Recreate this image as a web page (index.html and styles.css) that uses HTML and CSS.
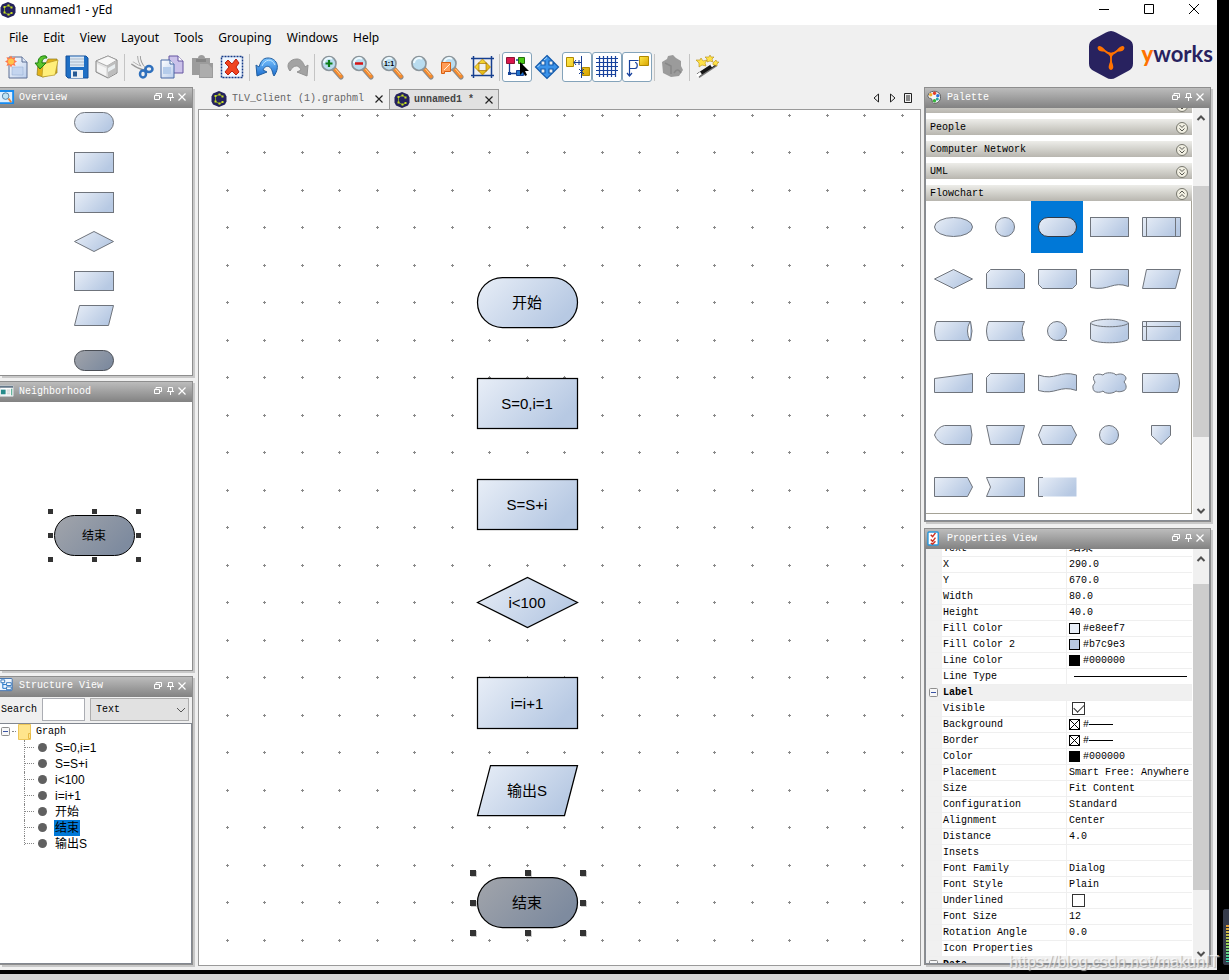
FILE: index.html
```html
<!DOCTYPE html>
<html lang="en">
<head>
<meta charset="utf-8">
<title>unnamed1 - yEd</title>
<link rel="stylesheet" href="styles.css">
</head>
<body>
<svg class="defs" aria-hidden="true">
  <defs>
    <linearGradient id="fill" x1="0" y1="0" x2="1" y2="0.5"><stop offset="0" stop-color="#e8eef7"/><stop offset="1" stop-color="#b7c9e3"/></linearGradient>
    <linearGradient id="dim" x1="0" y1="0" x2="1" y2="0.5"><stop offset="0" stop-color="#a2a5ab"/><stop offset="1" stop-color="#7e8b9f"/></linearGradient>
    <linearGradient id="paper" x1="0" y1="0" x2="1" y2="1"><stop offset="0" stop-color="#fff"/><stop offset="1" stop-color="#b9cdec"/></linearGradient>
    <linearGradient id="gold" x1="0" y1="0" x2="1" y2="1"><stop offset="0" stop-color="#ffe94a"/><stop offset="1" stop-color="#d9a400"/></linearGradient>
    <linearGradient id="blue" x1="0" y1="0" x2="0" y2="1"><stop offset="0" stop-color="#7cc4ff"/><stop offset="1" stop-color="#1c6fd0"/></linearGradient>
    <symbol id="yed" viewBox="0 0 16 16"><path d="M8 0l6 2.600 1.500 3v5L14 13.400 8 16l-6-2.600-1.500-2.800v-5l1.500-3z" fill="#23215c"/><path d="M11.500 5.500L8.500 3.500 4.500 5v5.500l4 2.300 3-1.600" fill="none" stroke="#7f9a2e" stroke-width="1"/><path d="M7.500 2.500h2v2h-2zM3.500 4h2v2h-2zM3.500 9.500h2v2h-2zM7.500 11.500h2v2h-2zM10.500 4.500h2v2h-2zM10.500 10h2v2h-2z" fill="#c6dc22"/></symbol>
    <symbol id="float" viewBox="0 0 10 10"><path d="M3 3V1.500h5.500v4H7M1.500 3.500h5v4h-5z" fill="none" stroke="#fff"/></symbol>
    <symbol id="pin" viewBox="0 0 10 10"><path d="M3.500 1.500h4v4h-4zM2 5.500h7M5.500 6v3" fill="none" stroke="#fff"/></symbol>
    <symbol id="close" viewBox="0 0 10 10"><path d="M1.500 1.500l7 7M8.500 1.500l-7 7" fill="none" stroke="currentColor" stroke-width="1.200"/></symbol>
    <symbol id="lens" viewBox="0 0 26 26"><path d="M15 15l7 8" stroke="#8b8b8b" stroke-width="5" stroke-linecap="round"/><path d="M16 15.500l6 7" stroke="#f58a2c" stroke-width="3.500" stroke-linecap="round"/><path d="M16.500 15l5 6" stroke="#ffd09a"/><circle cx="10" cy="9.500" r="7" fill="#b9dcef" stroke="#8b959b" stroke-width="1.700"/><path d="M5 9a5 5 0 0 1 8-4" fill="none" stroke="#eefaff" stroke-width="2"/></symbol>
    <symbol id="down" viewBox="0 0 14 14"><circle cx="7" cy="7" r="5.500" fill="#f1efe2" stroke="#77776d"/><path d="M4.500 4l2.500 2.500L9.500 4M4.500 7.500L7 10l2.500-2.500" fill="none" stroke="#55554e"/></symbol>
    <symbol id="up" viewBox="0 0 14 14"><circle cx="7" cy="7" r="5.500" fill="#f1efe2" stroke="#77776d"/><path d="M4.500 6.500L7 4l2.500 2.500M4.500 10L7 7.500 9.500 10" fill="none" stroke="#55554e"/></symbol>
    <symbol id="chev-up" viewBox="0 0 10 10"><path d="M1.500 7L5 3.500 8.500 7" fill="none" stroke="#505050" stroke-width="2"/></symbol>
    <symbol id="chev-down" viewBox="0 0 10 10"><path d="M1.500 3L5 6.500 8.500 3" fill="none" stroke="#505050" stroke-width="2"/></symbol>
    <symbol id="minus" viewBox="0 0 10 10"><rect x=".5" y=".5" width="8" height="8" rx="1" fill="#f7f7f7" stroke="#8d8d8d"/><path d="M2 4.500h5" stroke="#3a53a4"/></symbol>
    <pattern id="dots" x="27" y="4" width="75" height="75" patternUnits="userSpaceOnUse">
      <path d="M0 1.500h3M1.500 0v3M37 1.500h3M38.500 0v3M0 38.500h3M1.500 37v3M37 38.500h3M38.500 37v3" stroke="#8a8a8a" shape-rendering="crispEdges"/>
    </pattern>
  </defs>
</svg>

<div class="screen">
  <main class="window">
    <header class="titlebar">
      <svg class="i16"><use href="#yed"/></svg>
      <h1>unnamed1 - yEd</h1>
      <div class="caption">
        <button aria-label="Minimize"><svg viewBox="0 0 12 12"><path d="M1 5.500h10" stroke="#000"/></svg></button>
        <button aria-label="Maximize"><svg viewBox="0 0 12 12"><path d="M1.500.500h9v9h-9z" fill="none" stroke="#000"/></svg></button>
        <button aria-label="Close"><svg viewBox="0 0 12 12"><path d="M1 0l10 10M11 0L1 10" stroke="#000"/></svg></button>
      </div>
    </header>

    <div class="top">
      <div class="commands">
        <nav class="menu">
          <a href="#">File</a><a href="#">Edit</a><a href="#">View</a><a href="#">Layout</a><a href="#">Tools</a><a href="#">Grouping</a><a href="#">Windows</a><a href="#">Help</a>
        </nav>
        <div class="toolbar">
          <button aria-label="New"><svg viewBox="0 0 26 26"><path d="M5 3h13l5 5v16H5z" fill="url(#paper)" stroke="#5c6f94"/><path d="M18 3v5h5" fill="#dfe9f8" stroke="#5c6f94"/><path d="M8 13h11v8H8z" fill="#c4d5ef" stroke="#91a8cf" stroke-width=".5"/><path d="M7 1.500l1.500 2.500 3-1-1 3 2.500 1.500-2.500 1.500 1 3-3-1L7 13.500 5.500 11l-3 1 1-3L1 7.500 3.500 6l-1-3 3 1z" fill="#ff7a4c"/><circle cx="7" cy="7.500" r="3" fill="#ffc44a"/></svg></button>
          <button aria-label="Open"><svg viewBox="0 0 26 26"><path d="M4 9h8l2-4h9v14l-14 4-6-2z" fill="#e3b21b" stroke="#8b7a20" stroke-width=".7"/><path d="M9 10l15-4-3 15-13 2z" fill="#ffef7a" stroke="#b59622" stroke-width=".7"/><path d="M12 2C6 1 4 5 4 9H1l5 6 6-6H8c0-3 1-5 5-5z" fill="#5ac52b" stroke="#1c7e13"/></svg></button>
          <button aria-label="Save"><svg viewBox="0 0 26 26"><path d="M2 2h20l2 2v20H4l-2-2z" fill="#1e6fc5" stroke="#15509a"/><path d="M6 2.500h14V13H6z" fill="#dbe8f5"/><path d="M6 5h14M6 8h14M6 11h14" stroke="#a9b7c7"/><path d="M7 16h12v8H7z" fill="#e9eef3"/><path d="M9 17.500h4v5H9z" fill="#275a94"/></svg></button>
          <button aria-label="Print"><svg viewBox="0 0 26 26"><path d="M2 7l12-5 9 4v13l-9 5-12-6z" fill="#e2e2e2" stroke="#848484"/><path d="M2 7l11 5 10-6-9-4z" fill="#f8f8f8" stroke="#909090" stroke-width=".7"/><path d="M13 12l9-5v12l-8 5z" fill="#bdbdbd"/><path d="M3 10l9 4v8l-9-5z" fill="#f4f4f4"/><path d="M14 14l7-4v4l-7 4z" fill="#e9eef0"/></svg></button>
          <i class="sep"></i>
          <button aria-label="Cut"><svg viewBox="0 0 26 26"><path d="M3 9c4 3 8 5 13 6M10 2c0 5 2 9 6 14" fill="none" stroke="#989898" stroke-width="3.500"/><path d="M3 8.500c4 3 8 5 12 6M10 2c0 5 2 9 5 12" fill="none" stroke="#f0f0f0" stroke-width="1.800"/><ellipse cx="20" cy="15" rx="3.500" ry="3" fill="none" stroke="#2f70bd" stroke-width="2.500"/><ellipse cx="14" cy="20" rx="3" ry="3.500" fill="none" stroke="#2f70bd" stroke-width="2.500"/></svg></button>
          <button aria-label="Copy"><svg viewBox="0 0 26 26"><path d="M10 2h9l5 5v12H10z" fill="#cbc2ea" stroke="#6554a0"/><path d="M19 2v5h5" fill="#fff" stroke="#6554a0"/><path d="M2 6h9l4 4v14H2z" fill="url(#paper)" stroke="#4869a5"/><path d="M11 6v4h4" fill="#fff" stroke="#4869a5"/><path d="M4 13h8v7H4z" fill="#b5cceb"/></svg></button>
          <button aria-label="Paste"><svg viewBox="0 0 26 26"><path d="M3 4h6c0-4 7-4 7 0h5v5h3v15H10v-3H3z" fill="#9c9c9c"/><path d="M7 5h10v3H7z" fill="#858585"/><path d="M11 10h8l4 4v9H11z" fill="#adadad"/></svg></button>
          <button aria-label="Delete"><svg viewBox="0 0 26 26"><path d="M2.500 2.500h21v21h-21z" fill="#eef6ff" stroke="#163b87" stroke-width="1.500" stroke-dasharray="2 1"/><path d="M9 6l4 4 4-5 3 4-3 4 3 5-3 3-4-4-4 4-3-3 4-5-4-4z" fill="#f04420" stroke="#b92010"/></svg></button>
          <i class="sep"></i>
          <button aria-label="Undo"><svg viewBox="0 0 26 26"><path d="M2 11l1 11 10-4-4-2c2-5 8-6 10 4l1 2c7-10 2-18-6-18-5 0-7 3-9 9z" fill="url(#blue)" stroke="#225e9f"/><path d="M8 12c3-7 10-8 13-1" fill="none" stroke="#bfe5ff"/></svg></button>
          <button aria-label="Redo"><svg viewBox="0 0 26 26"><path d="M24 11l-1 11-10-4 4-2C15 11 10 10 6 17 1 11 6 5 13 5c4 0 6 3 8 8z" fill="#a3a3a3" stroke="#929292"/></svg></button>
          <i class="sep"></i>
          <button aria-label="Zoom in"><svg viewBox="0 0 26 26"><use href="#lens"/><path d="M10 6v7M6.500 9.500h7" stroke="#0b7c18" stroke-width="2.200"/></svg></button>
          <button aria-label="Zoom out"><svg viewBox="0 0 26 26"><use href="#lens"/><path d="M6 9.500h8" stroke="#d51616" stroke-width="2.500"/></svg></button>
          <button aria-label="Zoom 1:1"><svg viewBox="0 0 26 26"><use href="#lens"/><text x="10" y="12" class="one">1:1</text></svg></button>
          <button aria-label="Zoom"><svg viewBox="0 0 26 26"><use href="#lens"/></svg></button>
          <button aria-label="Zoom to selection"><svg viewBox="0 0 26 26"><use href="#lens"/><path d="M2.500 8.500h9v9h-6v2h-3z" fill="#ff9d58" stroke="#d95f10"/><path d="M5 16l6-6" stroke="#fff2da"/></svg></button>
          <button aria-label="Fit content"><svg viewBox="0 0 26 26"><path d="M4.500 2v22M22.500 2v22M2 4.500h23M2 21.500h23" stroke="#163f8f" stroke-width="1.500"/><path d="M13.500 5l4.500 4.500H9zM13.500 21l4.500-4.500H9zM5.500 13L10 8.500v9zM21.500 13L17 8.500v9z" fill="url(#gold)" stroke="#a87500" stroke-width=".7"/></svg></button>
          <i class="sep"></i>
          <button class="on" aria-label="Edit mode"><svg viewBox="0 0 26 26"><path d="M5.500 10v9.500h8M12 6h3M18 9v9" stroke="#174396" fill="none" stroke-width="1.300"/><path d="M2.500 3.500h8v6h-8z" fill="#d9164c" stroke="#8c1435"/><path d="M14.500 3.500h6v6h-6z" fill="#4cc915" stroke="#257010"/><path d="M4 18h3v3H4z" fill="#174396"/><path d="M12.500 16.500h7v5h-7z" fill="#2374ca" stroke="#174396"/><path d="M16 8v13l3-3 2 4 2-1-2-4h4z" fill="#000"/></svg></button>
          <button aria-label="Navigation mode"><svg viewBox="0 0 26 26"><path d="M13 1.500l5.500 5.500H15v4h4V7.500l5.500 5.500-5.500 5.500V15h-4v4h3.500L13 24.500 7.500 19H11v-4H7v3.500L1.500 13 7 7.500V11h4V7H7.500z" fill="#3b93ea" stroke="#155cad" stroke-width="1.200"/><path d="M13 3.500L10 6M3.500 13L6 10.500" stroke="#b4deff"/></svg></button>
          <button class="on" aria-label="Snap lines"><svg viewBox="0 0 26 26"><path d="M2.500 3.500h7v9h-7zM18.500 13.500h7v8h-7z" fill="url(#gold)" stroke="#b08900"/><path d="M17.500 2v22M10 8.500h7M12 6l-2 2.500 2 2.500M15 6v5M15 15l5 5M20 15l-5 5" fill="none" stroke="#173d91"/></svg></button>
          <button class="on" aria-label="Grid"><svg viewBox="0 0 26 26"><path d="M5.500 2v21M9.500 2v21M13.500 2v21M17.500 2v21M21.500 2v21M2 4.500h22M2 8.500h22M2 12.500h22M2 16.500h22M2 20.500h20" stroke="#17419c" stroke-width="1.200"/></svg></button>
          <button class="on" aria-label="Orthogonal edges"><svg viewBox="0 0 26 26"><path d="M5.500 21V6.500h9M3 19l2.500 3L8 19M6 14.500h5c3 0 3-6 0-6" fill="none" stroke="#17419c" stroke-width="1.200"/><path d="M15.500 2.500h9v9h-9z" fill="url(#gold)" stroke="#b08900"/></svg></button>
          <i class="sep"></i>
          <button aria-label="Groups"><svg viewBox="0 0 26 26"><path d="M3 8l5-3 1-3 5-1 3 3 5 3v5l2 4-4 6-8 1-8-4z" fill="#9b9b9b"/><path d="M6 9l6 3v8M15 19c3-5 5-3 7 0" stroke="#888" stroke-width="1.500" fill="none"/></svg></button>
          <i class="sep"></i>
          <button aria-label="Magic"><svg viewBox="0 0 26 26"><path d="M4 22L22 10" stroke="#777" stroke-width="5"/><path d="M4 21L21 10" stroke="#151515" stroke-width="3.500"/><path d="M3 22l4-3M17 12l4-3" stroke="#fff" stroke-width="3"/><path d="M7 4l2 3 4-1-2 3 1 3-4-1-3 2v-4L2 6h4zM16 1l1 2h3l-2 2 1 3-3-1-3 1v-3l-2-2h4zM22 6l1 2h2l-2 2v2l-2-1h-2V9z" fill="#ffe247" stroke="#b58d12" stroke-width=".6"/></svg></button>
        </div>
      </div>
      <a class="logo" href="#" aria-label="yworks">
        <svg viewBox="0 0 46 48"><path d="M18 1.500q5-3 10 0l13 7q4 2 4 7v17q0 5-4 7l-13 7q-5 3-10 0l-13-7q-4-2-4-7v-17q0-5 4-7z" fill="#28225f"/><path d="M12 17c4 1 7 6 11 6s7-5 11-6M23 23v13" fill="none" stroke="#ff7200" stroke-width="1.800"/><path d="M9.500 17c1-4 6-1 8 3-3 1-7 1-8-3zM36.500 17c-1-4-6-1-8 3 3 1 7 1 8-3zM23 29c2 4 4 9 0 10-4-1-2-6 0-10zM19 21c3 1 5 1 8 0l-4 6z" fill="#ff7200"/></svg>
        <span><b>y</b>works</span>
      </a>
    </div>

    <div class="work">
      <aside class="left">
        <section class="panel">
          <header><svg class="picon" viewBox="0 0 16 16"><path d="M-1 1h15v13H-1z" fill="#dff0ff" stroke="#178bf0" stroke-width="2"/><circle cx="6" cy="6.500" r="3.500" fill="#bfe4f5" stroke="#517da3"/><path d="M9 9l3 4" stroke="#ec8430" stroke-width="2"/></svg><h2>Overview</h2>
            <button aria-label="Float"><svg><use href="#float"/></svg></button><button aria-label="Pin"><svg><use href="#pin"/></svg></button><button aria-label="Close"><svg><use href="#close"/></svg></button></header>
          <svg class="view" role="img" aria-label="Overview of the graph"><g fill="url(#fill)" stroke="#6f747c"><rect x="74.500" y="4.500" width="39" height="20" rx="10"/><rect x="74.500" y="44.500" width="39" height="20"/><rect x="74.500" y="84.500" width="39" height="20"/><path d="M74.500 133.500l19.500-10 19.500 10-19.500 10z"/><rect x="74.500" y="163.500" width="39" height="19"/><path d="M79.500 197.500h34l-5 20h-34z"/><rect x="74.500" y="242.500" width="39" height="20" rx="10" fill="url(#dim)" stroke="#4b4f56"/></g></svg>
        </section>

        <section class="panel">
          <header><svg class="picon" viewBox="0 0 16 16"><path d="M0 2h14v11H0z" fill="#fff" stroke="#d3d9dd"/><path d="M0 2h14v2H0z" fill="#65788a"/><path d="M1 6h5v5H1z" fill="#278b8b"/><path d="M7 6.500h4M7 8.500h4M7 10.500h4" stroke="#bcc5c8"/><path d="M12.500 5v7" stroke="#2d9a79"/></svg><h2>Neighborhood</h2>
            <button aria-label="Float"><svg><use href="#float"/></svg></button><button aria-label="Pin"><svg><use href="#pin"/></svg></button><button aria-label="Close"><svg><use href="#close"/></svg></button></header>
          <svg class="view" role="img" aria-label="Neighborhood of the selection"><rect x="54.500" y="113.500" width="80" height="40" rx="20" fill="url(#dim)" stroke="#000"/><text x="94" y="138" class="t12">结束</text><path d="M48 107h5v5h-5zM92 107h5v5h-5zM136 107h5v5h-5zM48 131h5v5h-5zM136 131h5v5h-5zM48 155h5v5h-5zM92 155h5v5h-5zM136 155h5v5h-5z" fill="#333"/></svg>
        </section>

        <section class="panel">
          <header><svg class="picon" viewBox="0 0 16 16"><rect x="-1" y=".5" width="14" height="13" rx="1" fill="#eef6ff" stroke="#3c6fae"/><path d="M3 4v7h4M3 7h4" fill="none" stroke="#1571c9"/><path d="M1 2h4v3H1zM7 5h5v3H7zM7 9.500h5v3H7z" fill="#fff" stroke="#3276bd"/></svg><h2>Structure View</h2>
            <button aria-label="Float"><svg><use href="#float"/></svg></button><button aria-label="Pin"><svg><use href="#pin"/></svg></button><button aria-label="Close"><svg><use href="#close"/></svg></button></header>
          <form class="search">
            <label for="q">Search</label><input id="q" type="text">
            <span class="combo"><select aria-label="Search in"><option>Text</option></select><svg viewBox="0 0 10 10"><path d="M1 3l4 4 4-4" fill="none" stroke="#555"/></svg></span>
          </form>
          <div class="tree">
            <div class="root"><svg class="box"><use href="#minus"/></svg><i></i><svg class="folder" viewBox="0 0 14 16"><path d="M.500.500h12v15H.500z" fill="#ffe58c" stroke="#eec75a"/><path d="M10.500 9.500h2v5h-2z" fill="#ffe58c" stroke="#e6b944"/></svg><span>Graph</span></div>
            <ul>
              <li><span>S=0,i=1</span></li><li><span>S=S+i</span></li><li><span>i&lt;100</span></li><li><span>i=i+1</span></li><li><span>开始</span></li><li class="sel"><span>结束</span></li><li><span>输出S</span></li>
            </ul>
          </div>
        </section>
      </aside>

      <section class="center">
        <div class="tabs">
          <div class="tab"><svg class="i16"><use href="#yed"/></svg><span>TLV_Client (1).graphml</span><button aria-label="Close tab"><svg><use href="#close"/></svg></button></div>
          <div class="tab active"><svg class="i16"><use href="#yed"/></svg><span>unnamed1 *</span><button aria-label="Close tab"><svg><use href="#close"/></svg></button></div>
          <div class="tabnav">
            <button aria-label="Previous"><svg viewBox="0 0 10 10"><path d="M7.500 1v8l-4.500-4z" fill="none" stroke="#222"/></svg></button>
            <button aria-label="Next"><svg viewBox="0 0 10 10"><path d="M3.500 1v8l4.500-4z" fill="none" stroke="#222"/></svg></button>
            <button aria-label="List"><svg viewBox="0 0 10 10"><path d="M1.500.500h7v9h-7zM3 3h4M3 5h4M3 7h4" fill="none" stroke="#222"/></svg></button>
          </div>
        </div>
        <svg class="canvas" role="img" aria-label="Flowchart">
          <rect width="100%" height="100%" fill="url(#dots)"/>
          <g fill="url(#fill)" stroke="#000" stroke-width="1.250">
            <rect x="278.500" y="167.500" width="100" height="50" rx="25"/>
            <rect x="278.500" y="268.500" width="100" height="50"/>
            <rect x="278.500" y="369.500" width="100" height="50"/>
            <path d="M278.500 492.500l50-25 50 25-50 25z"/>
            <rect x="278.500" y="567.500" width="100" height="51"/>
            <path d="M291.500 655.500h87l-13 50h-87z"/>
            <rect x="278.500" y="767.500" width="100" height="50" rx="25" fill="url(#dim)"/>
          </g>
          <g class="t15"><text x="328" y="198">开始</text><text x="328" y="299">S=0,i=1</text><text x="328" y="400">S=S+i</text><text x="328" y="498">i&lt;100</text><text x="328" y="599">i=i+1</text><text x="328" y="686">输出S</text><text x="328" y="798">结束</text></g>
          <path d="M272 761h6v6h-6zM327 761h6v6h-6zM382 761h6v6h-6zM272 791h6v6h-6zM382 791h6v6h-6zM272 821h6v6h-6zM327 821h6v6h-6zM382 821h6v6h-6z" fill="#ccc"/>
          <path d="M271 760h6v6h-6zM326 760h6v6h-6zM381 760h6v6h-6zM271 790h6v6h-6zM381 790h6v6h-6zM271 820h6v6h-6zM326 820h6v6h-6zM381 820h6v6h-6z" fill="#333"/>
        </svg>
      </section>

      <aside class="right">
        <section class="panel boxed">
          <header><svg class="picon" viewBox="0 0 16 16"><path d="M1 6C2 0 12 0 14 5c2 6-3 10-7 9-3-1 0-4-3-5C2 9 1 8 1 6z" fill="#f5f5f5" stroke="#555"/><circle cx="4" cy="5" r="1.800" fill="#f2b02b"/><circle cx="8" cy="3.500" r="1.800" fill="#e33b26"/><circle cx="11.500" cy="6" r="1.800" fill="#2a70d7"/><circle cx="8" cy="11.500" r="1.800" fill="#35b53a"/><circle cx="11" cy="9.500" r="1.600" fill="#27a8a5"/></svg><h2>Palette</h2>
            <button aria-label="Float"><svg><use href="#float"/></svg></button><button aria-label="Pin"><svg><use href="#pin"/></svg></button><button aria-label="Close"><svg><use href="#close"/></svg></button></header>
          <div class="scroller">
            <div class="palette">
              <button class="group">Swimlane Nodes and Table Nodes<svg><use href="#down"/></svg></button>
              <button class="group">People<svg><use href="#down"/></svg></button>
              <button class="group">Computer Network<svg><use href="#down"/></svg></button>
              <button class="group">UML<svg><use href="#down"/></svg></button>
              <button class="group">Flowchart<svg><use href="#up"/></svg></button>
              <div class="shapes">
                <svg viewBox="0 0 52 52"><ellipse cx="26.500" cy="26" rx="19" ry="9.500"/></svg>
                <svg viewBox="0 0 52 52"><circle cx="26" cy="26" r="9.500"/></svg>
                <svg viewBox="0 0 52 52" class="picked"><rect x="7.500" y="16.500" width="38" height="19" rx="9.500"/></svg>
                <svg viewBox="0 0 52 52"><rect x="7.500" y="16.500" width="38" height="19"/></svg>
                <svg viewBox="0 0 52 52"><path d="M7.500 16.500h38v19h-38zM11.500 16.500v19M40.500 16.500v19"/></svg>
                <svg viewBox="0 0 52 52"><path d="M7.500 26l19-9.500 19 9.500-19 9.500z"/></svg>
                <svg viewBox="0 0 52 52"><path d="M11.500 16.500h30l4 4v15h-38v-15z"/></svg>
                <svg viewBox="0 0 52 52"><path d="M7.500 16.500h38v15l-4 4h-30l-4-4z"/></svg>
                <svg viewBox="0 0 52 52"><path d="M7.500 16.500h38v17c-16-6-19 5-38 1z"/></svg>
                <svg viewBox="0 0 52 52"><path d="M11.500 16.500h34l-5 19h-33z"/></svg>
                <svg viewBox="0 0 52 52"><path d="M9.500 16.500h34q3 9.500 0 19h-34q-4-9.500 0-19zM43 16.500q-5 9.500 0 19"/></svg>
                <svg viewBox="0 0 52 52"><path d="M9.500 16.500h36q-5 9.500 0 19h-36q-4-9.500 0-19z"/></svg>
                <svg viewBox="0 0 52 52"><circle cx="26" cy="26" r="9.500"/><path d="M26 35.500h10"/></svg>
                <svg viewBox="0 0 52 52"><path d="M7.500 18v16c4 5 34 5 38 0V18c-4-5-34-5-38 0c4 5 34 5 38 0"/></svg>
                <svg viewBox="0 0 52 52"><path d="M7.500 16.500h38v19h-38zM11.500 16.500v19M7.500 21.500h38"/></svg>
                <svg viewBox="0 0 52 52"><path d="M7.500 21.500l38-5v19h-38z"/></svg>
                <svg viewBox="0 0 52 52"><path d="M11.500 16.500h34v19h-38v-15z"/></svg>
                <svg viewBox="0 0 52 52"><path d="M7.500 18c17 6 21-5 38 0v15.500c-17-6-21 5-38 0z"/></svg>
                <svg viewBox="0 0 52 52"><path d="M20 18c2-3 11-3 13 0 4-2 9-1 10 3 0 2-1 2-2 4 3 3 3 8-1 9-3 1-5 1-7 0-3 3-11 3-13 0-3 2-10 2-10-3-1-3 2-4 2-6-4-5 0-10 8-7z"/></svg>
                <svg viewBox="0 0 52 52"><path d="M7.500 16.500h35q4 9.500 0 19h-35z"/></svg>
                <svg viewBox="0 0 52 52"><path d="M17.500 16.500h26q3 9.500 0 19h-26q-7-2-10-9.500 3-8 10-9.500z"/></svg>
                <svg viewBox="0 0 52 52"><path d="M7.500 16.500h38l-5 19h-29z"/></svg>
                <svg viewBox="0 0 52 52"><path d="M11.500 16.500h29l5 9.500-5 9.500h-29l-4-9.500z"/></svg>
                <svg viewBox="0 0 52 52"><circle cx="26" cy="26" r="9.500"/></svg>
                <svg viewBox="0 0 52 52"><path d="M16.500 16.500h19v10l-9.500 9-9.500-9z"/></svg>
                <svg viewBox="0 0 52 52"><path d="M7.500 16.500h33l5 9.500-5 9.500h-33z"/></svg>
                <svg viewBox="0 0 52 52"><path d="M7.500 16.500h38v19h-38l4-9.500z"/></svg>
                <svg viewBox="0 0 52 52"><path d="M7.500 16.500h38v19h-38z" stroke="none"/><path d="M12 16.500H7.500v19H12" fill="none"/></svg>
              </div>
            </div>
            <div class="bar"><svg><use href="#chev-up"/></svg><i class="before-a"></i><i class="thumb thumb-a"></i><i class="after-a"></i><svg><use href="#chev-down"/></svg></div>
          </div>
        </section>

        <section class="panel boxed">
          <header><svg class="picon" viewBox="0 0 16 16"><rect x="1" y="1" width="11" height="14" rx="1" fill="#fff" stroke="#2696dc" stroke-width="1.500"/><path d="M4 4l2 2 3-4M4 9l2 2 3-4M4 13l2 1 3-3" fill="none" stroke="#cb2f20" stroke-width="1.500"/></svg><h2>Properties View</h2>
            <button aria-label="Float"><svg><use href="#float"/></svg></button><button aria-label="Pin"><svg><use href="#pin"/></svg></button><button aria-label="Close"><svg><use href="#close"/></svg></button></header>
          <div class="scroller">
            <div class="props">
              <table>
                <colgroup><col class="c1"><col class="c2"><col class="c3"></colgroup>
                <tr><td></td><th>Text</th><td class="cjk">结束</td></tr>
                <tr><td></td><th>X</th><td>290.0</td></tr>
                <tr><td></td><th>Y</th><td>670.0</td></tr>
                <tr><td></td><th>Width</th><td>80.0</td></tr>
                <tr><td></td><th>Height</th><td>40.0</td></tr>
                <tr><td></td><th>Fill Color</th><td><div><i class="sw s1"></i>#e8eef7</div></td></tr>
                <tr><td></td><th>Fill Color 2</th><td><div><i class="sw s2"></i>#b7c9e3</div></td></tr>
                <tr><td></td><th>Line Color</th><td><div><i class="sw s3"></i>#000000</div></td></tr>
                <tr><td></td><th>Line Type</th><td><hr></td></tr>
                <tr class="cat"><td><svg class="box"><use href="#minus"/></svg></td><th colspan="2">Label</th></tr>
                <tr><td></td><th><label for="vis">Visible</label></th><td><input id="vis" type="checkbox" checked></td></tr>
                <tr><td></td><th>Background</th><td><div><svg class="sw" viewBox="0 0 9 9"><path d="M0 0l9 9M9 0L0 9" stroke="#000"/></svg>#<s></s></div></td></tr>
                <tr><td></td><th>Border</th><td><div><svg class="sw" viewBox="0 0 9 9"><path d="M0 0l9 9M9 0L0 9" stroke="#000"/></svg>#<s></s></div></td></tr>
                <tr><td></td><th>Color</th><td><div><i class="sw s3"></i>#000000</div></td></tr>
                <tr><td></td><th>Placement</th><td>Smart Free: Anywhere</td></tr>
                <tr><td></td><th>Size</th><td>Fit Content</td></tr>
                <tr><td></td><th>Configuration</th><td>Standard</td></tr>
                <tr><td></td><th>Alignment</th><td>Center</td></tr>
                <tr><td></td><th>Distance</th><td>4.0</td></tr>
                <tr><td></td><th>Insets</th><td></td></tr>
                <tr><td></td><th>Font Family</th><td>Dialog</td></tr>
                <tr><td></td><th>Font Style</th><td>Plain</td></tr>
                <tr><td></td><th><label for="und">Underlined</label></th><td><input id="und" type="checkbox"></td></tr>
                <tr><td></td><th>Font Size</th><td>12</td></tr>
                <tr><td></td><th>Rotation Angle</th><td>0.0</td></tr>
                <tr><td></td><th>Icon Properties</th><td></td></tr>
                <tr class="cat"><td><svg class="box"><use href="#minus"/></svg></td><th colspan="2">Data</th></tr>
              </table>
            </div>
            <div class="bar"><svg><use href="#chev-up"/></svg><i class="before-b"></i><i class="thumb thumb-b"></i><i class="after-b"></i><svg><use href="#chev-down"/></svg></div>
          </div>
        </section>
      </aside>
    </div>
  </main>
  <div class="desktop"><div class="meter"></div></div>
  <footer class="taskbar"></footer>
  <span class="watermark">https://blog.csdn.net/makunIT</span>
</div>
</body>
</html>
```
FILE: styles.css
```css
* { box-sizing: border-box; }
body { margin: 0; background: #000; color: #000; font: 10px/16px "Liberation Mono", "Noto Sans CJK SC", monospace; }
button { margin: 0; padding: 0; border: 0; background: none; font: inherit; color: inherit; }
a { color: inherit; text-decoration: none; }
h1, h2 { margin: 0; font-size: inherit; font-weight: 400; }
svg { display: block; flex: none; }
.defs { position: absolute; width: 0; height: 0; }
.screen { position: relative; height: 100vh; display: grid; grid-template: minmax(0, 1fr) 6px / minmax(0, 1fr) 12px; row-gap: 4px; }
.window { display: flex; flex-direction: column; min-height: 0; background: #f0f0f0; }
.desktop { display: flex; flex-direction: column; justify-content: flex-end; align-items: flex-end; padding-bottom: 5px; }
.meter { width: 6px; height: 56px; border: 2px solid #353b4b; border-width: 16px 0 3px 3px; border-radius: 3px 0 0 3px; background: repeating-linear-gradient(transparent 0 2px, #20242f 2px 3px), linear-gradient(#eba23c, #9ed255, #2fd0b0); }
.taskbar { grid-column: 1 / 3; background: #d4d4d4; }
.watermark { position: absolute; right: 10px; bottom: 8px; font: 16px/20px "Liberation Sans", sans-serif; color: rgba(255, 255, 255, .7); text-shadow: 1px 1px 1px #aaa; }

.titlebar { display: flex; align-items: center; height: 25px; padding-bottom: 6px; background: #fff; font: 12px/18px "Noto Sans", sans-serif; }
.titlebar h1 { margin-left: 5px; }
.i16 { width: 16px; height: 16px; }
.caption { display: flex; margin-left: auto; padding-right: 1px; }
.caption button { width: 45px; display: grid; place-items: center; }
.caption svg { width: 12px; height: 12px; }
.top { display: flex; justify-content: space-between; height: 60px; }
.menu { display: flex; gap: 15px; height: 25px; padding-left: 9px; font: 12px/25px "Noto Sans", sans-serif; }
.toolbar { display: flex; align-items: center; height: 34px; padding-left: 2px; }
.toolbar button { width: 30px; height: 30px; display: grid; place-items: center; }
.toolbar svg { width: 26px; height: 26px; }
.toolbar .on { border: 1px solid #84a3ba; border-radius: 3px; background: #fff; }
.sep { width: 1px; height: 27px; margin: 0 2px; background: #c4c4c4; }
.one { font: bold 7px "Liberation Sans", sans-serif; text-anchor: middle; }
.logo { display: flex; align-items: center; gap: 8px; padding-right: 4px; color: #28225f; font: bold 22px/30px Lato, sans-serif; }
.logo svg { width: 46px; height: 48px; }
.logo span { padding-bottom: 2px; }
.logo b { color: #ff7200; }

.work { flex: 1; min-height: 0; display: grid; grid-template-columns: 193px minmax(0, 1fr) 287px; padding: 2px 6px 4px 0; }
.left, .right { display: grid; min-height: 0; padding-bottom: 1px; }
.left { grid-template-rows: repeat(3, minmax(0, 1fr)); gap: 5px; }
.right { grid-template-rows: minmax(0, 435fr) minmax(0, 437fr); gap: 6px; }
.panel { display: flex; flex-direction: column; min-height: 0; border: 1px solid #8e8e8e; border-left: 0; background: #fff; box-shadow: 2px 2px 0 #c8c8c8; }
.boxed { border-left: 1px solid #8e8e8e; }
.panel > header { flex: none; display: flex; align-items: center; height: 20px; padding: 0 4px 2px 0; color: #fff; background: linear-gradient(#bcbcbc, #828282); }
.panel h2 { flex: 1; margin-left: 4px; padding-top: 1px; }
.boxed h2 { margin-left: 5px; }
.boxed .picon { margin-left: 2px; }
.picon { width: 15px; height: 15px; }
.panel > header button { width: 12px; height: 12px; display: grid; place-items: center; }
.panel > header button svg { width: 10px; height: 10px; }
.view { flex: 1; width: 100%; min-height: 0; }
text { text-anchor: middle; }
.t12 { font: 12px "Liberation Sans", "Noto Sans CJK SC", sans-serif; }
.t15 { font: 15px "Liberation Sans", "Noto Sans CJK SC", sans-serif; }

.search { display: flex; align-items: center; height: 26px; padding: 0 3px 0 1px; background: #f0f0f0; }
.search label { width: 41px; }
.search input { width: 43px; height: 23px; border: 1px solid #abadb3; background: #fff; font: inherit; }
.combo { position: relative; flex: 1; margin-left: 5px; }
.combo select { display: block; width: 100%; height: 23px; padding: 0 5px; border: 1px solid #adadad; border-radius: 0; background: #e1e1e1; font: inherit; color: inherit; appearance: none; }
.combo svg { position: absolute; right: 3px; top: 7px; width: 10px; height: 10px; pointer-events: none; }
.tree { flex: 1; border: 1px solid #828790; border-left: 0; font: 12px/16px "Liberation Sans", "Noto Sans CJK SC", sans-serif; }
.root { display: flex; align-items: center; height: 16px; padding-left: 1px; font: 10px/16px "Liberation Mono", monospace; }
.box { width: 10px; height: 10px; }
.root i { width: 4px; margin: 0 1px; border-top: 1px dotted #888; }
.folder { width: 14px; height: 16px; margin: 0 4px 0 1px; }
.tree ul { margin: 0 0 0 24px; padding: 0; list-style: none; }
.tree li { display: flex; align-items: center; height: 16px; border-left: 1px dotted #888; }
.tree li:last-child { height: 9px; }
.tree li:last-child::before, .tree li:last-child::after, .tree li:last-child span { margin-top: 7px; }
.tree li::before { content: ""; width: 9px; border-top: 1px dotted #888; }
.tree li::after { content: ""; order: 1; width: 9px; height: 9px; margin-left: 4px; border-radius: 5px; background: #606060; }
.tree li span { order: 2; margin-left: 7px; padding: 0 1px; }
.sel span { background: #0078d7; }

.center { display: flex; flex-direction: column; min-width: 0; margin: 0 3px 0 5px; }
.tabs { display: flex; align-items: flex-end; height: 22px; }
.tab { display: flex; align-items: center; height: 20px; padding-left: 13px; color: #666; }
.tab span { margin: 0 10px 0 5px; }
.tab button { width: 10px; height: 10px; color: #222; }
.tab button svg, .tabnav svg { width: 10px; height: 10px; }
.tab.active { margin-left: 5px; padding: 0 4px; border: 1px solid #999; border-bottom: 0; background: #e1e1e1; font-weight: 700; color: #444; }
.tab.active span { margin-left: 4px; }
.tabnav { display: flex; gap: 6px; margin-left: auto; padding: 0 8px 6px 0; }
.canvas { flex: 1; width: 100%; min-height: 0; border: 1px solid #999; background: #fff; }

.scroller { flex: 1; min-height: 0; display: flex; overflow: hidden; border: 1px solid #868b93; border-top: 0; }
.palette { flex: 1; min-width: 0; }
.group { display: flex; align-items: center; justify-content: space-between; width: 100%; height: 16px; margin-bottom: 6px; padding: 1px 3px 0 4px; text-align: left; background: linear-gradient(#edede9, #b8b6af); }
.group:first-child { margin-top: -11px; }
.group:nth-child(5) { margin-bottom: 0; }
.group svg { width: 14px; height: 14px; }
.shapes { display: grid; grid-template-columns: repeat(5, 52px); padding-left: 1px; border: 1px solid #a5a296; border-top: 0; border-left-width: 0; }
.shapes svg { width: 52px; height: 52px; fill: url(#fill); stroke: #6f747c; }
.shapes .picked { background: #0078d7; stroke: #303a48; }
.bar { display: flex; flex-direction: column; align-items: center; width: 16px; margin-left: 1px; padding: 5px 0 4px; background: #f0f0f0; }
.bar svg { width: 10px; height: 10px; }
.thumb { width: 16px; background: #cdcdcd; }
.before-a { flex: 63; } .thumb-a { flex: 252; } .after-a { flex: 69; }
.before-b { flex: 20; } .thumb-b { flex: 305; } .after-b { flex: 59; }

.props { flex: 1; min-width: 0; overflow: hidden; }
table { width: 100%; margin-top: -8px; border-collapse: separate; border-spacing: 0; table-layout: fixed; }
.c1 { width: 16px; }
.c2 { width: 125px; }
td, th { height: 16px; padding: 0 0 0 2px; border-bottom: 1px solid #efefef; line-height: 15px; font-weight: 400; text-align: left; white-space: nowrap; }
th { padding-left: 1px; border-right: 1px solid #efefef; }
tr td:first-child, .cat th { background: #f0f0f0; }
.cat th { font-weight: 700; }
.cjk { font-size: 12px; }
.cat .box { margin-left: 1px; }
td div { display: flex; align-items: center; gap: 3px; }
.sw { width: 11px; height: 11px; border: 1px solid #000; }
.s1 { background: #e8eef7; }
.s2 { background: #b7c9e3; }
.s3 { background: #000; }
td s { width: 24px; margin-left: -3px; border-top: 1px solid #000; }
hr { margin: 0 5px; border: 0; border-top: 1px solid #000; }
td input { display: grid; place-items: center; width: 13px; height: 13px; margin: 0 0 0 3px; border: 1px solid #333; appearance: none; background: #fff; }
td input:checked::before { content: ""; width: 9px; height: 5px; margin-top: -3px; border: solid #333; border-width: 0 0 1px 1px; transform: rotate(-45deg); }
```
